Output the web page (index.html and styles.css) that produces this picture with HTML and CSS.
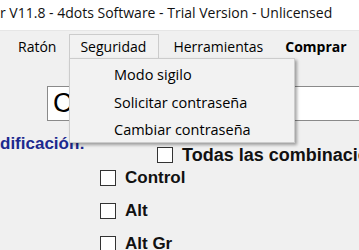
FILE: index.html
```html
<!DOCTYPE html>
<html lang="es">
<head>
  <meta charset="UTF-8" />
  <title>4dots Software</title>
  <link rel="stylesheet" href="styles.css">
</head>
<body>
  <div class="titlebar">r V11.8 - 4dots Software - Trial Version - Unlicensed</div>

  <div class="menubar">
    <span class="menu-item raton">Ratón</span>
    <span class="menu-item open">Seguridad</span>
    <span class="menu-item tools">Herramientas</span>
    <span class="menu-item buy">Comprar</span>
  </div>

  <div class="content">
    <div class="searchbox">Ca</div>
    <div class="section-label">dificación:</div>
    <div class="option all"><span class="box"></span>Todas las combinaciones</div>
    <div class="option"><span class="box"></span>Control</div>
    <div class="option"><span class="box"></span>Alt</div>
    <div class="option"><span class="box"></span>Alt Gr</div>
  </div>

  <!-- Seguridad dropdown -->
  <div class="dropdown">
    <div class="drop-item">Modo sigilo</div>
    <div class="drop-item">Solicitar contraseña</div>
    <div class="drop-item">Cambiar contraseña</div>
  </div>
</body>
</html>
```
FILE: styles.css
```css
body {
  margin: 0;
  width: 359px;
  height: 250px;
  overflow: hidden;
  background: #f0f0f0;
  font-family: "Open Sans", "Noto Sans", sans-serif;
  color: #000;
  position: relative;
}

.titlebar {
  height: 31px;
  line-height: 25px;
  background: #fff;
  font-size: 14px;
  white-space: nowrap;
  color: #111;
  border-bottom: 1px solid #e6e6e6;
  box-sizing: border-box;
}

.menubar {
  display: flex;
  height: 28px;
  align-items: flex-end;
  font-size: 14px;
  white-space: nowrap;
}

.menu-item {
  height: 25px;
  line-height: 23px;
  padding: 0 10px;
  box-sizing: border-box;
  border: 1px solid transparent;
  border-bottom: none;
}

.menu-item.raton {
  margin-left: 7px;
  margin-right: 2px;
}

.menu-item.open {
  border-color: #cccccc;
  background: #f2f2f2;
  width: 90px;
  padding-left: 10px;
}

.menu-item.tools {
  margin-left: 3px;
}

.menu-item.buy {
  font-weight: bold;
}

.content {
  white-space: nowrap;
  overflow: hidden;
}

.searchbox {
  margin: 27px 0 0 47px;
  height: 35px;
  box-sizing: border-box;
  border: 1px solid #8a8a8a;
  border-right: none;
  background: #fff;
  font-family: "Liberation Sans", Arial, sans-serif;
  font-size: 27px;
  line-height: 33px;
  padding-left: 5px;
}

.section-label {
  margin-top: 14px;
  font-family: "Liberation Sans", Arial, sans-serif;
  font-weight: bold;
  font-size: 17px;
  color: #1c2a8f;
  line-height: 17px;
}

.option {
  display: flex;
  align-items: center;
  gap: 9px;
  margin-left: 100px;
  height: 33px;
  font-family: "Liberation Sans", Arial, sans-serif;
  font-weight: bold;
  font-size: 17px;
  color: #111;
}

.option.all {
  margin-left: 157px;
  height: 20px;
  margin-top: -7px;
  margin-bottom: -4px;
  font-size: 18px;
}

.box {
  width: 16px;
  height: 16px;
  box-sizing: border-box;
  border: 1.5px solid #333;
  background: #fff;
  flex: none;
}

.dropdown {
  position: absolute;
  left: 69px;
  top: 58px;
  width: 226px;
  height: 85px;
  box-sizing: border-box;
  background: #f2f2f2;
  border: 1px solid #cccccc;
  box-shadow: 2px 2px 3px rgba(0, 0, 0, 0.35);
  padding-top: 2px;
  font-size: 14.5px;
}

.drop-item {
  height: 27.5px;
  line-height: 27px;
  padding-left: 44px;
  white-space: nowrap;
}
```
